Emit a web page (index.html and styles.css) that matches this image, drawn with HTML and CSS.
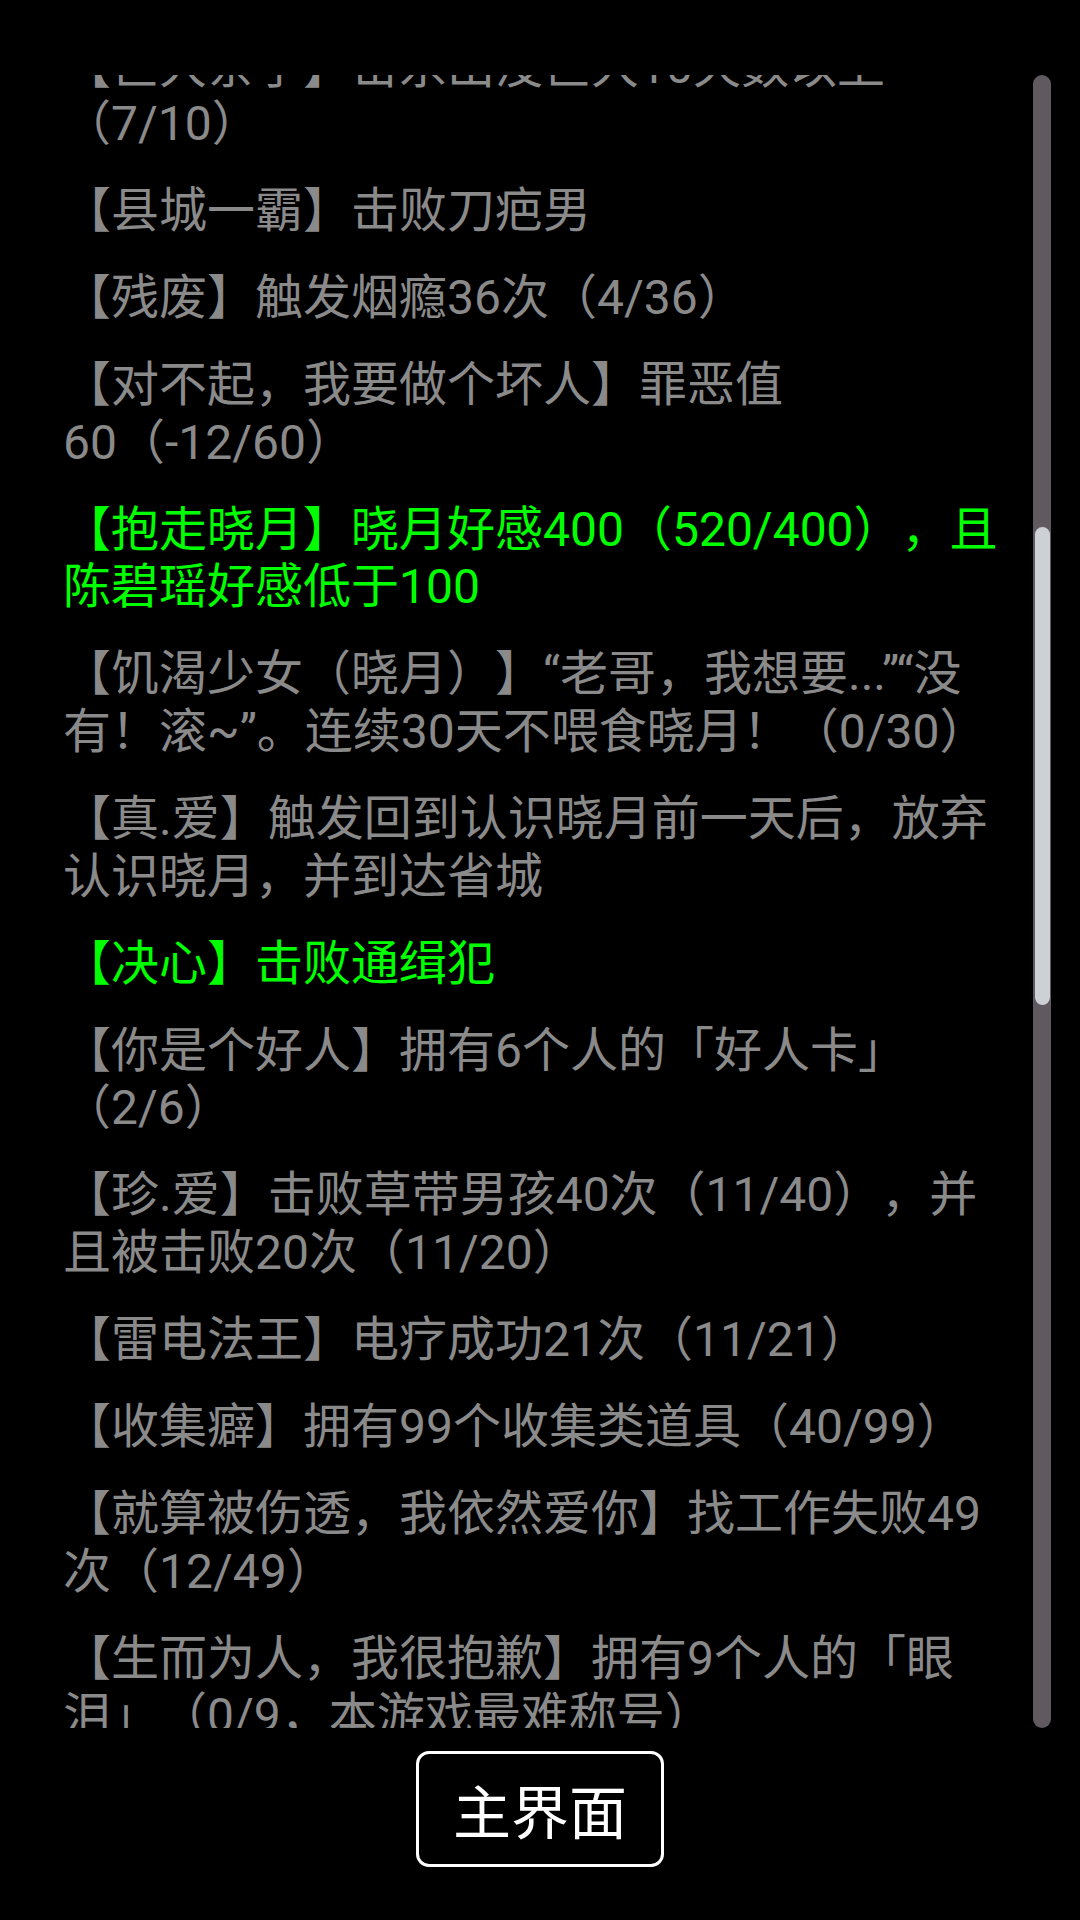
FILE: index.html
```html
<!DOCTYPE html>
<html lang="zh-CN">
<head>
<meta charset="utf-8">
<title>称号</title>
<link rel="stylesheet" href="styles.css">
</head>
<body>
<div class="main">
  <div class="viewport">
    <div class="list" style="margin-top:-37.5px">
      <p class="item">【巨大亲子】击杀出没巨大10天数以上（7/10）</p>
      <p class="item">【县城一霸】击败刀疤男</p>
      <p class="item">【残废】触发烟瘾36次（4/36）</p>
      <p class="item">【对不起，我要做个坏人】罪恶值<br>60（-12/60）</p>
      <p class="item done">【抱走晓月】晓月好感400（520/400），且陈碧瑶好感低于100</p>
      <p class="item">【饥渴少女（晓月）】“老哥，我想要...”“没有！滚~”。连续30天不喂食晓月！（0/30）</p>
      <p class="item">【真.爱】触发回到认识晓月前一天后，放弃认识晓月，并到达省城</p>
      <p class="item done">【决心】击败通缉犯</p>
      <p class="item">【你是个好人】拥有6个人的「好人卡」（2/6）</p>
      <p class="item">【珍.爱】击败草带男孩40次（11/40），并<br>且被击败20次（11/20）</p>
      <p class="item">【雷电法王】电疗成功21次（11/21）</p>
      <p class="item">【收集癖】拥有99个收集类道具（40/99）</p>
      <p class="item">【就算被伤透，我依然爱你】找工作失败49次（12/49）</p>
      <p class="item">【生而为人，我很抱歉】拥有9个人的「眼泪」（0/9，本游戏最难称号）</p>
    </div>
  </div>
  <div class="track">
    <div class="thumb" style="margin-top:452px;height:478px"></div>
  </div>
</div>
<div class="footer">
  <button class="home-btn">主界面</button>
</div>
</body>
</html>
```

FILE: styles.css
```css
html, body {
  margin: 0;
  padding: 0;
  background: #000;
}

body {
  width: 1080px;
  height: 1920px;
  display: flex;
  flex-direction: column;
  font-family: Roboto, "Noto Sans CJK SC", sans-serif;
  overflow: hidden;
}

.main {
  display: flex;
  margin-top: 75px;
  height: 1653px;
}

.viewport {
  flex: 1;
  overflow: hidden;
  padding: 0 17px 0 63px;
}

.list {
  display: flex;
  flex-direction: column;
  gap: 29.6px;
}

.item {
  margin: 0;
  font-size: 48px;
  line-height: 57.5px;
  color: #8a8a8a;
  text-spacing-trim: space-all;
}

.item.done {
  color: #00ff00;
}

.track {
  width: 18px;
  margin-right: 29px;
  background: #605a60;
  border-radius: 9px;
  display: flex;
  flex-direction: column;
}

.thumb {
  margin-left: 1.5px;
  margin-right: 1.5px;
  background: #cdd1d6;
  border-radius: 8px;
}

.footer {
  display: flex;
  justify-content: center;
  padding-top: 23px;
}

.home-btn {
  box-sizing: border-box;
  width: 248px;
  height: 116px;
  background: #000;
  border: 3.5px solid #fff;
  border-radius: 13px;
  color: #fff;
  font-family: Roboto, "Noto Sans CJK SC", sans-serif;
  font-size: 58px;
  padding: 0;
  display: flex;
  align-items: center;
  justify-content: center;
}
```
